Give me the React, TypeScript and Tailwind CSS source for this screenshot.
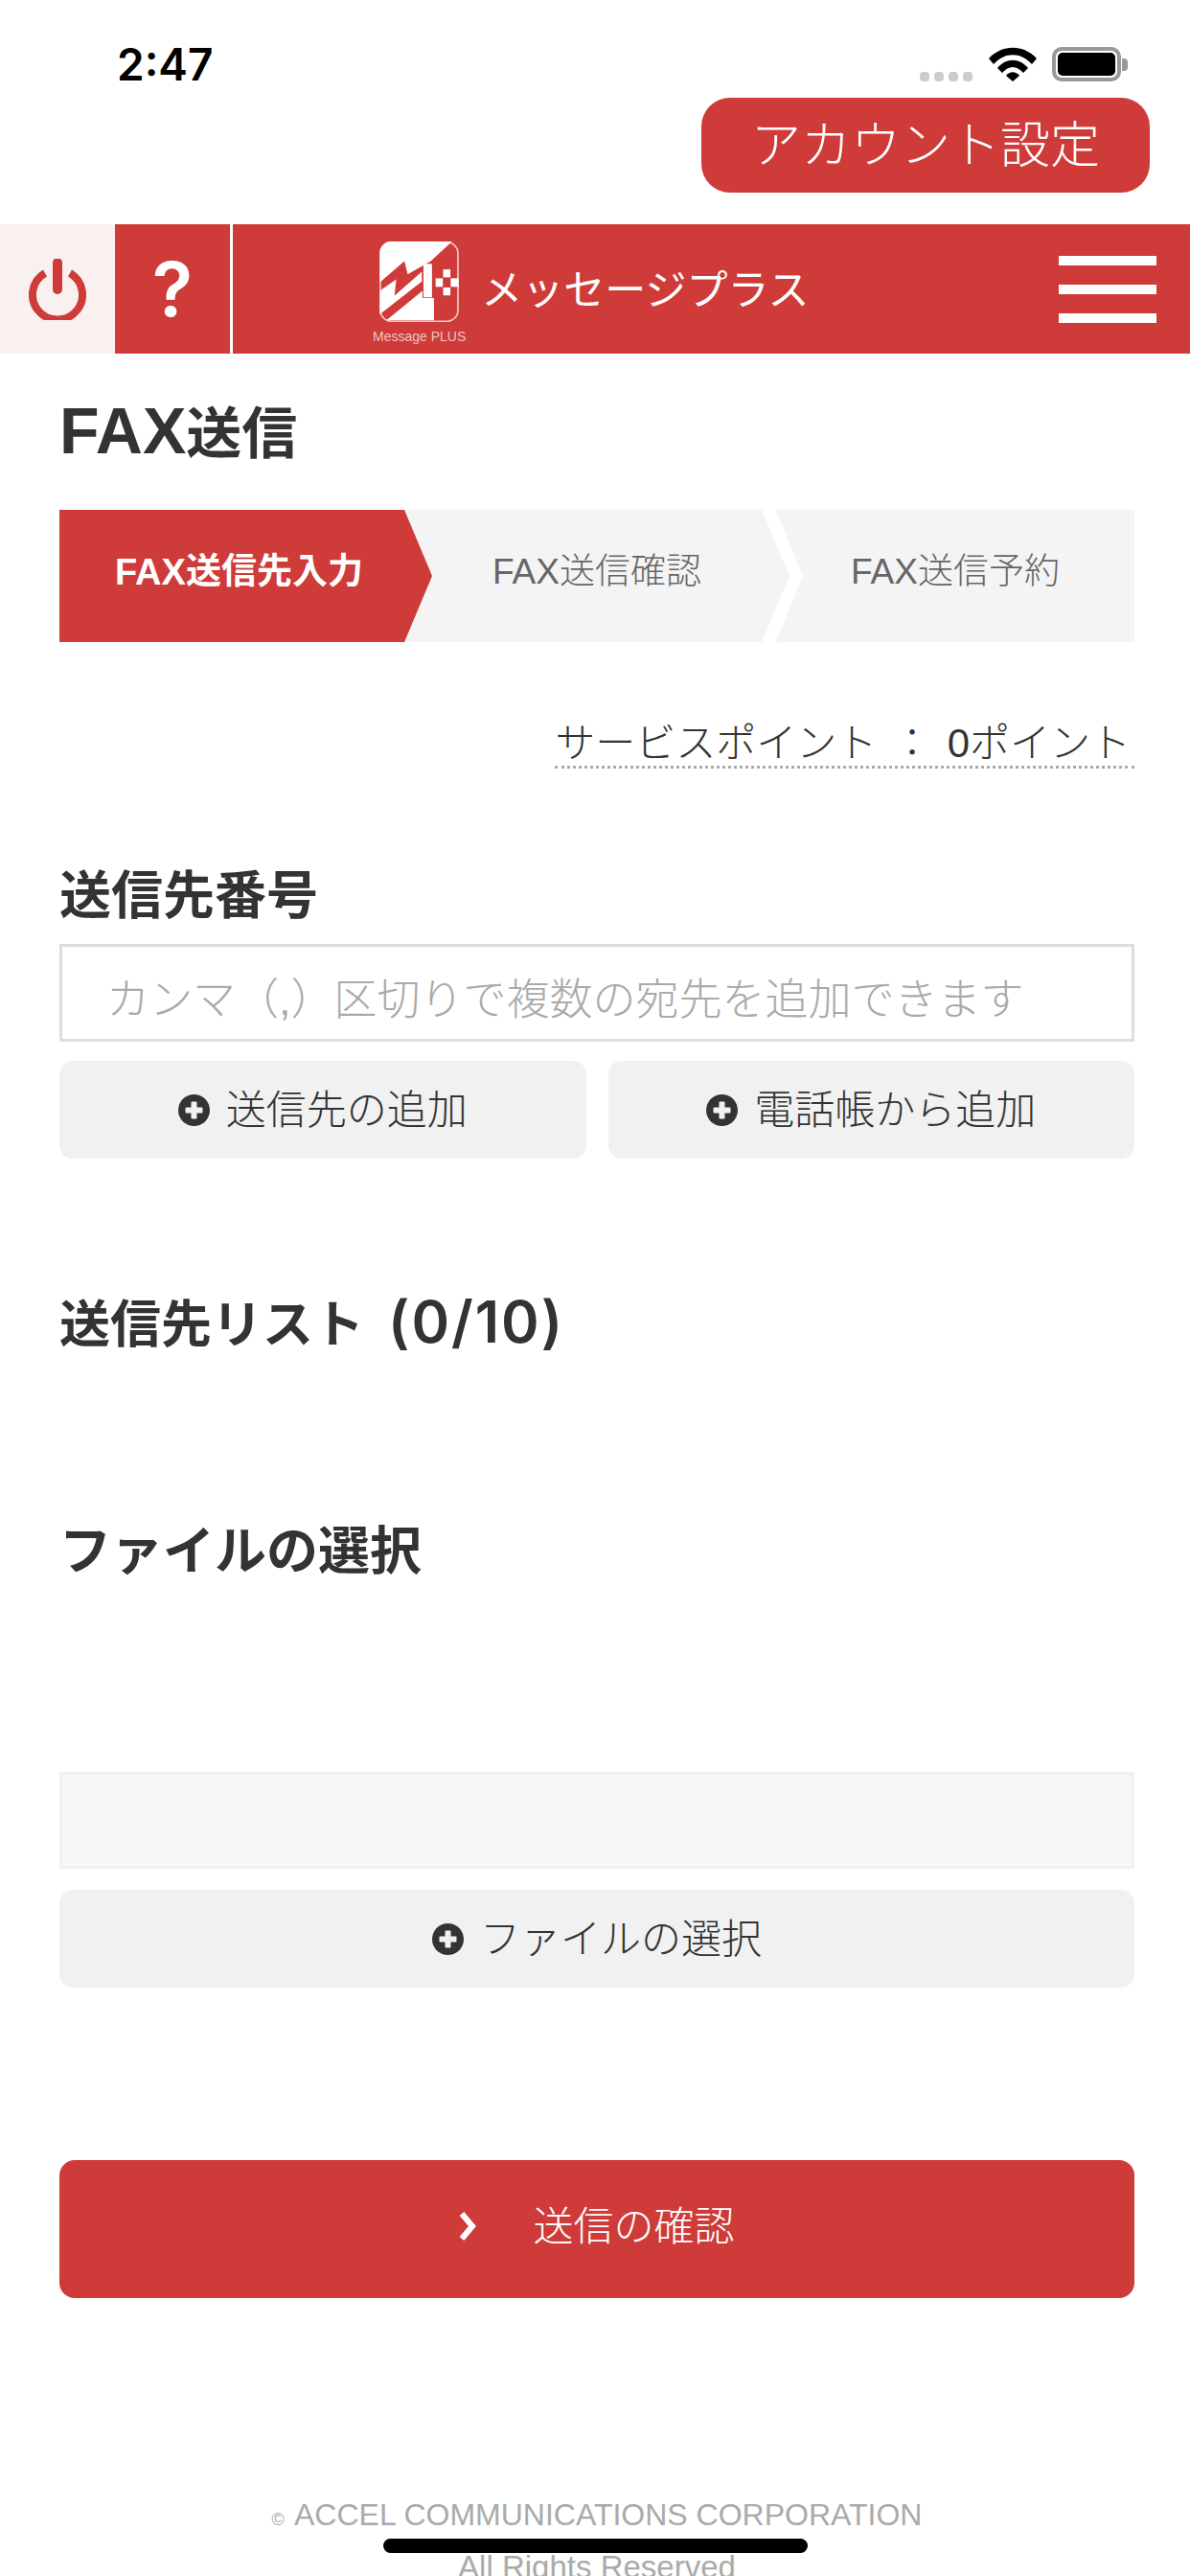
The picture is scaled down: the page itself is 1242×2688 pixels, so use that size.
const font = "font-['Liberation_Sans','Noto_Sans_CJK_JP',sans-serif]";

function PlusIcon() {
  return (
    <svg width="33" height="33" viewBox="0 0 33 33" className="shrink-0">
      <circle cx="16.5" cy="16.5" r="16.5" fill="#333333" />
      <rect x="13.5" y="7.5" width="6" height="18" rx="1" fill="#f1f1f1" />
      <rect x="7.5" y="13.5" width="18" height="6" rx="1" fill="#f1f1f1" />
    </svg>
  );
}

function GrayButton({ label, className }: { label: string; className?: string }) {
  return (
    <div className={`flex h-[102px] items-center justify-center gap-[17px] rounded-[14px] bg-[#f1f1f1] text-[42px] font-light text-[#333333] ${className ?? ""}`}>
      <PlusIcon />
      <span>{label}</span>
    </div>
  );
}

function StatusBar() {
  return (
    <div className="flex h-[102px] items-start justify-between pl-[122px] pr-[65px]">
      <span className="mt-[39px] font-['Inter',sans-serif] text-[46px] leading-[56px] font-semibold text-black">2:47</span>
      <div className="mt-[49px] flex items-end">
        <div className="flex gap-[5px]">
          {[0, 1, 2, 3].map((i) => (
            <div key={i} className="h-[10px] w-[10px] rounded-[4px] bg-[#cccccc]" />
          ))}
        </div>
        <svg width="50" height="36" viewBox="0 0 50 36" className="ml-[17px]">
          <path d="M0 12 C14 -3 36 -3 50 12 L45 18 C33 5 17 5 5 18 Z" fill="#000" />
          <path d="M9 22 C18 11 32 11 41 22 L36 27 C29 19 21 19 14 27 Z" fill="#000" />
          <path d="M18 30 C22 25 28 25 32 30 L25 36 Z" fill="#000" />
        </svg>
        <div className="ml-[16px] flex items-center">
          <div className="h-[36px] w-[72px] rounded-[10px] border-[4px] border-[#999999] bg-white p-[2px]">
            <div className="h-full w-full rounded-[5px] bg-black" />
          </div>
          <div className="ml-[1px] h-[13px] w-[6px] rounded-r-[4px] bg-[#999999]" />
        </div>
      </div>
    </div>
  );
}

function Logo() {
  return (
    <div className="flex flex-col items-center">
      <svg width="83" height="84" viewBox="0 0 240 245">
        <rect x="2" y="2" width="236" height="241" rx="34" fill="none" stroke="#ffffff" strokeOpacity="0.7" strokeWidth="5" />
        {/* upper white field above the M zigzag */}
        <path d="M34 0 H220 L155 60 L85 100 L75 60 L0 125 V34 A34 34 0 0 1 34 0 Z" fill="#ffffff" />
        {/* middle band */}
        <path d="M0 150 L50 115 L45 165 L128 92 V122 L0 222 Z" fill="#ffffff" />
        {/* lower field */}
        <path d="M20 240 L130 150 V172 H165 V240 Z" fill="#ffffff" />
        {/* right leg of the M */}
        <rect x="133" y="68" width="26" height="102" fill="#ffffff" />
        {/* plus checker */}
        <rect x="193" y="85" width="22" height="24" fill="#ffffff" />
        <rect x="170" y="112" width="22" height="26" fill="#ffffff" />
        <rect x="216" y="112" width="24" height="26" fill="#ffffff" />
        <rect x="193" y="140" width="22" height="24" fill="#ffffff" />
      </svg>
      <span className="mt-[8px] font-['Liberation_Sans',sans-serif] text-[14px] leading-[14px] whitespace-nowrap text-white/70">Message PLUS</span>
    </div>
  );
}

function TopBar() {
  return (
    <div className="flex h-[135px] bg-[#ce3b38]">
      <div className="flex w-[120px] items-center justify-center bg-[#f9f0f0]">
        <svg width="60" height="64" viewBox="0 0 60 64" fill="none" stroke="#ce3b38">
          <path d="M17 15 A26 26 0 1 0 43 15" strokeWidth="8" />
          <path d="M30 4 V32" strokeWidth="10" strokeLinecap="round" />
        </svg>
      </div>
      <div className="flex w-[120px] items-center justify-center font-['Inter',sans-serif] text-[78px] leading-none font-semibold text-white">?</div>
      <div className="w-[3px] bg-white" />
      <div className="ml-[146px] flex items-start pt-[18px]">
        <Logo />
        <span className="mt-[21px] ml-[16px] text-[43px] leading-[60px] whitespace-nowrap text-white">メッセージプラス</span>
      </div>
      <div className="mr-[35px] ml-auto flex w-[102px] flex-col gap-[20px] self-center">
        <div className="h-[10px] bg-white" />
        <div className="h-[10px] bg-white" />
        <div className="h-[10px] bg-white" />
      </div>
    </div>
  );
}

function Steps() {
  return (
    <div className="mt-[39px] flex h-[138px] text-[37px]">
      <div className="z-10 flex w-[389px] items-center bg-[#ce3b38] pb-[8px] pl-[58px] font-bold text-white [clip-path:polygon(0_0,360px_0,100%_50%,360px_100%,0_100%)]">
        <span className="text-[38px]">FAX</span>送信先入力
      </div>
      <div className="ml-[-29px] flex w-[402px] items-center bg-[#f4f4f4] pb-[8px] pl-[92px] font-light text-[#666666] [clip-path:polygon(0_0,373px_0,100%_50%,373px_100%,0_100%)]">
        FAX送信確認
      </div>
      <div className="ml-[-14px] flex flex-1 items-center bg-[#f4f4f4] pb-[8px] pl-[78px] font-light text-[#666666] [clip-path:polygon(0_0,100%_0,100%_100%,0_100%,28px_50%)]">
        FAX送信予約
      </div>
    </div>
  );
}

export default function App() {
  return (
    <div className={`relative h-[2688px] w-[1242px] overflow-hidden bg-white ${font}`}>
      <StatusBar />
      <div className="flex justify-end pr-[42px]">
        <div className="flex h-[99px] w-[468px] items-center justify-center rounded-[30px] bg-[#ce3b38] text-[52px] font-light text-white">アカウント設定</div>
      </div>
      <div className="mt-[33px]">
        <TopBar />
      </div>

      <div className="pr-[58px] pl-[62px]">
        <h1 className="mt-[40px] flex items-baseline text-[58px] leading-[80px] font-bold text-[#333333]">
          <span className="text-[68px]">FAX</span>送信
        </h1>
        <Steps />

        <div className="mt-[83px] flex justify-end">
          <div className="border-b-[3px] border-dotted border-[#aaaaaa] pr-[4px] text-[42px] leading-[46px] font-light text-[#333333]">
            サービスポイント <span className="mx-[4px]">：</span> 0ポイント
          </div>
        </div>

        <h2 className="mt-[95px] text-[54px] leading-[76px] font-semibold text-[#333333]">送信先番号</h2>
        <div className="mt-[12px] flex h-[102px] items-end border-[3px] border-[#dddddd] pb-[10px] pl-[46px] text-[45px] leading-[60px] font-light text-[#aaaaaa]">
          カンマ（,）区切りで複数の宛先を追加できます
        </div>
        <div className="mt-[20px] flex gap-[23px]">
          <GrayButton label="送信先の追加" className="flex-1" />
          <GrayButton label="電話帳から追加" className="flex-1" />
        </div>

        <h2 className="mt-[132px] flex items-baseline text-[53px] leading-[76px] font-semibold text-[#333333]">
          送信先リスト<span className="ml-[25px] font-['Inter',sans-serif] text-[60px] font-semibold tracking-[2px]">(0/10)</span>
        </h2>
        <h2 className="mt-[160px] text-[54px] leading-[76px] font-semibold text-[#333333]">ファイルの選択</h2>

        <div className="mt-[192px] h-[101px] border-[3px] border-[#f1f1f1] bg-[#f7f7f7]" />
        <GrayButton label="ファイルの選択" className="mt-[22px]" />

        <div className="mt-[180px] flex h-[144px] items-center justify-center rounded-[16px] bg-[#ce3b38] pb-[6px] text-[42px] font-light text-white">
          <svg width="18" height="30" viewBox="0 0 18 30" fill="none" stroke="#ffffff" strokeWidth="6" className="mr-[59px]">
            <path d="M3 2 L14 15 L3 28" />
          </svg>
          <span>送信の確認</span>
        </div>

        <div className="mt-[201px] flex flex-col items-center text-[32px] leading-[50px] font-light text-[#aaaaaa]">
          <span className="whitespace-nowrap"><span className="mr-[3px] text-[18px]">©</span> ACCEL COMMUNICATIONS CORPORATION</span>
          <span className="text-[33px] whitespace-nowrap">All Rights Reserved</span>
        </div>
      </div>

      <div className="absolute top-[2649px] left-[400px] h-[15px] w-[443px] rounded-full bg-black" />
    </div>
  );
}
